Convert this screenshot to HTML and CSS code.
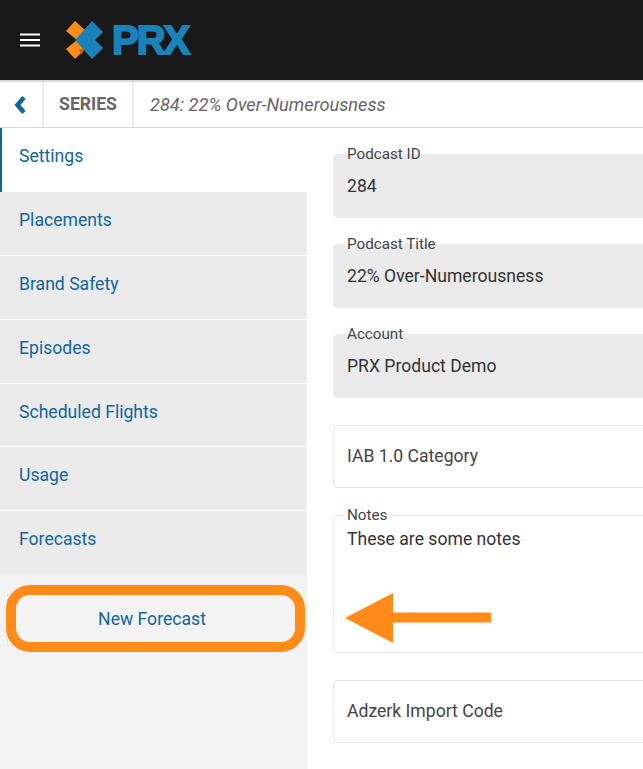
FILE: index.html
```html
<!DOCTYPE html>
<html lang="en">
<head>
<meta charset="utf-8">
<title>PRX</title>
<link rel="stylesheet" href="styles.css">
</head>
<body>
<header class="topbar">
  <svg class="menu" width="20" height="14" viewBox="0 0 20 14"><path d="M0 1.500h20M0 7h20M0 12.500h20" stroke="#fff" stroke-width="2"/></svg>
  <div class="logo">
    <svg class="mark" width="38" height="38" viewBox="0 0 38 38">
      <path d="M0 10L9 0l11 10-9 9z" fill="#ff8c1a"/>
      <path d="M0 28l9 10 10-10-8-9z" fill="#ff8c1a"/>
      <path d="M13 28l6 0-4 6z" fill="#b8651c"/>
      <path d="M9 19L26 0l11 11-8 8 8 8-11 11z" fill="#1a82b8"/>
    </svg>
    <span class="logo-text">PRX</span>
  </div>
</header>
<nav class="subnav">
  <a class="back"><svg width="13" height="18" viewBox="0 0 13 18"><path d="M10 1.500L3.500 9l6.500 7.500" fill="none" stroke="#10659b" stroke-width="4.500"/></svg></a>
  <span class="crumb">SERIES</span>
  <span class="title">284: 22% Over-Numerousness</span>
</nav>
<div class="main">
  <aside class="sidebar">
    <a class="tab active">Settings</a>
    <a class="tab">Placements</a>
    <a class="tab">Brand Safety</a>
    <a class="tab">Episodes</a>
    <a class="tab">Scheduled Flights</a>
    <a class="tab">Usage</a>
    <a class="tab last-tab">Forecasts</a>
    <div class="new-wrap"><a class="new-btn">New Forecast</a></div>
  </aside>
  <section class="form">
    <div class="field filled"><span class="label">Podcast ID</span><span class="value">284</span></div>
    <div class="field filled"><span class="label">Podcast Title</span><span class="value">22% Over-Numerousness</span></div>
    <div class="field filled"><span class="label">Account</span><span class="value">PRX Product Demo</span></div>
    <div class="field plain"><span class="value muted">IAB 1.0 Category</span></div>
    <div class="field notes"><span class="label">Notes</span><span class="value">These are some notes</span></div>
    <div class="field plain"><span class="value muted">Adzerk Import Code</span></div>
  </section>
</div>
<div class="ring"></div>
<svg class="arrow" width="148" height="50" viewBox="0 0 148 50"><path d="M0 25L48 0v19.500h98v10H48V50z" fill="#ff8c1a"/></svg>
</body>
</html>
```

FILE: styles.css
```css
* { box-sizing: border-box; }
html, body { margin: 0; height: 769px; overflow: hidden; }
body { position: relative; background: #fff; font-family: Roboto, "Liberation Sans", sans-serif; font-size: 17.6px; color: #333; }
.topbar { height: 82px; background: #181818; border-bottom: 2px solid #d9d9d9; display: flex; align-items: center; padding-left: 20px; }
.menu { display: block; }
.logo { display: flex; align-items: center; margin-left: 26px; }
.mark { display: block; }
.logo-text { margin-left: 8px; font-family: "Liberation Sans", sans-serif; font-weight: 700; font-size: 40px; line-height: 38px; letter-spacing: -2px; color: #1a82b8; -webkit-text-stroke: 2px #1a82b8; }
.subnav { height: 46px; display: flex; align-items: stretch; border-bottom: 1px solid #d9d9d9; }
.back { width: 44px; border-right: 2px solid #ececec; display: flex; align-items: center; justify-content: center; padding-right: 1px; }
.crumb { width: 90px; border-right: 2px solid #ececec; display: flex; align-items: center; justify-content: center; padding-bottom: 1px; font-weight: 700; color: #666; font-size: 17.6px; }
.title { display: flex; align-items: center; padding-left: 16px; padding-bottom: 1px; font-style: italic; color: #666; font-size: 18.2px; }
.main { display: flex; height: 641px; }
.sidebar { width: 307px; flex: none; padding-top: 0.45px; background: #f3f3f3; }
.tab { display: block; height: 63.8px; padding-left: 19px; line-height: 56px; background: #ebebeb; border-bottom: 1px solid #fff; color: #10659b; font-size: 17.6px; }
.tab.active { background: #fff; border-left: 2px solid #10659b; border-bottom: 0; padding-left: 17px; }
.tab.last-tab { height: 63.2px; border-bottom: 0; }
.new-wrap { padding: 19px 10px 0 7px; }
.new-btn { display: block; height: 53px; line-height: 50px; text-align: center; color: #10659b; font-size: 17.6px; border: 1px dashed #d9d9d9; border-radius: 3px; }
.form { flex: 1; display: flex; flex-direction: column; padding: 26px 0 0 26px; min-width: 0; }
.field { position: relative; flex: none; height: 64px; margin-right: -6px; margin-bottom: 26px; border-radius: 4px; padding-left: 14px; display: flex; align-items: center; }
.filled { background: #ebebeb; }
.plain { height: 63px; border: 1px solid #e6e6e6; padding: 0 0 2px 13px; margin-top: 1px; }
.notes { height: 138px; border: 1px solid #e6e6e6; padding: 12px 0 0 13px; align-items: flex-start; margin-top: 1px; }
.label { position: absolute; left: 10px; top: -9px; padding: 0 4px; font-size: 15.2px; line-height: 18px; color: #444; background: linear-gradient(#fff 9px, transparent 9px); }
.notes .label { left: 9px; top: -10px; padding: 0 5px 0 4px; background: linear-gradient(#fff 11px, transparent 11px); }
.value { font-size: 17.6px; line-height: 22px; color: #333; }
.muted { color: #444; }
.ring { position: absolute; left: 6px; top: 585px; width: 299px; height: 67px; border: 10px solid #ff8c1a; border-radius: 24px; }
.arrow { position: absolute; left: 345px; top: 593px; }
```
